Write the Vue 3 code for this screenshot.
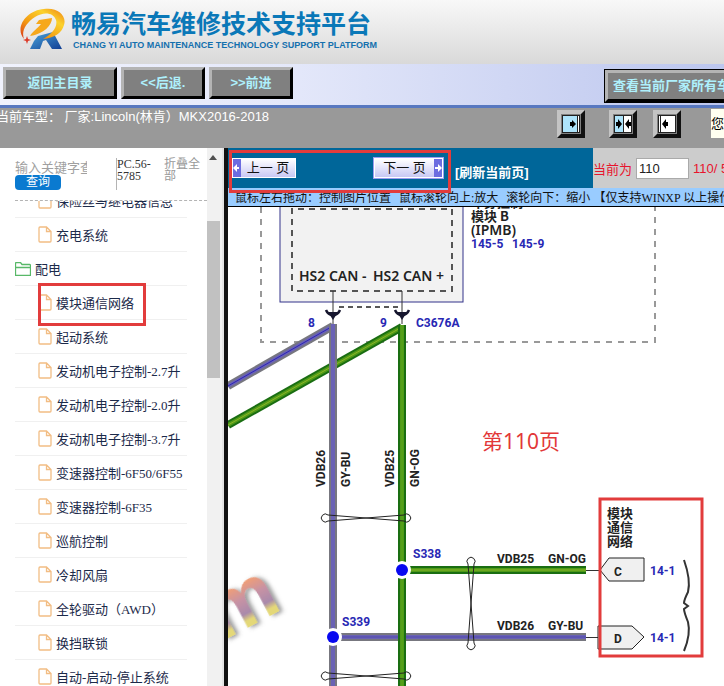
<template>
  <div class="page">
    <header class="banner">
      <svg class="logo" viewBox="20 8 46 42" aria-hidden="true">
        <defs>
          <linearGradient id="swoosh" x1="0" y1="1" x2="1" y2="0">
            <stop offset="0" stop-color="#d8341c" />
            <stop offset="0.35" stop-color="#f39a12" />
            <stop offset="0.7" stop-color="#fbd22c" />
            <stop offset="1" stop-color="#ee7d14" />
          </linearGradient>
          <linearGradient id="leg" x1="0" y1="0" x2="1" y2="1">
            <stop offset="0" stop-color="#4aa6dc" />
            <stop offset="1" stop-color="#123f94" />
          </linearGradient>
        </defs>
        <path d="M38 36 L53 32 L62 49 H52 L46 40 L43 41 L40 49 H30 L34 41 Z" fill="url(#leg)" />
        <path d="M24 39 C14 27 27 10 44 9 C58 7 67 16 64 25 C62 33 54 38 43 39 C52 34 58 27 56 20 C53 12 43 12 35 17 C26 23 21 31 24 39 Z" fill="url(#swoosh)" />
        <path d="M30 36 C32 32 38 28 41 24 L36 24 L39 20 L52 18 C52 25 44 34 30 36 Z" fill="#f6a81c" />
        <path d="M27 36 L28 39 L31 40 L28 41 L27 44 L26 41 L23 40 L26 39 Z" fill="#dc3a28" />
      </svg>
      <div class="brand">
        <h1>畅易汽车维修技术支持平台</h1>
        <p>CHANG YI AUTO MAINTENANCE TECHNOLOGY SUPPORT PLATFORM</p>
      </div>
    </header>

    <nav class="toolbar">
      <button class="bevel wide">返回主目录</button>
      <button class="bevel">&lt;&lt;后退.</button>
      <button class="bevel">&gt;&gt;前进</button>
      <button class="bevel all-models">查看当前厂家所有车型</button>
    </nav>

    <div class="status">
      <span class="model">当前车型： 厂家:Lincoln(林肯）MKX2016-2018</span>
      <div class="layout-btns">
        <button class="square" aria-label="展开左栏">
          <svg viewBox="0 0 18 18">
            <rect x="0.5" y="0.5" width="17" height="17" fill="#fff" stroke="#222" />
            <rect x="1" y="1" width="14" height="16" fill="#aee4fb" />
            <path d="M15.5 1 V17" stroke="#222" />
            <path d="M8 7 H10 V5 L14 9 L10 13 V11 H8 Z" />
          </svg>
        </button>
        <button class="square" aria-label="左右均分">
          <svg viewBox="0 0 18 18">
            <rect x="0.5" y="0.5" width="17" height="17" fill="#fff" stroke="#222" />
            <rect x="1" y="1" width="8" height="16" fill="#aee4fb" />
            <path d="M9.5 1 V17" stroke="#222" />
            <path d="M2 7 H4 V4 L8 9 L4 14 V11 H2 Z M17 7 H15 V4 L11 9 L15 14 V11 H17 Z" />
          </svg>
        </button>
        <button class="square" aria-label="收起左栏">
          <svg viewBox="0 0 18 18">
            <rect x="0.5" y="0.5" width="17" height="17" fill="#fff" stroke="#222" />
            <path d="M2.5 1 V17" stroke="#222" />
            <path d="M10 7 H8 V4 L4 9 L8 14 V11 H10 Z" />
          </svg>
        </button>
      </div>
      <span class="greeting">您好</span>
    </div>

    <main class="body">
      <aside class="sidebar">
        <div class="tree-panel">
          <div class="search">
            <div class="search-form">
              <input v-model="keyword" type="text" aria-label="关键字" placeholder="输入关键字查询" />
              <button class="query">查询</button>
            </div>
            <span class="code">PC.56-5785</span>
            <a href="#" class="fold">折叠全部</a>
          </div>
          <div class="tree">
            <ul>
              <li v-for="item in items" :key="item.name" :class="{ folder: item.folder }">
                <svg v-if="item.folder" class="folder-icon" viewBox="0 0 16 14">
                  <path d="M0.5 13.5 V1.5 Q0.5 0.5 1.5 0.5 H5.5 L7 2.5 H14.5 Q15.5 2.5 15.5 3.5 V13.5 Z M0.5 5.5 H15.5" />
                </svg>
                <svg v-else class="file-icon" viewBox="0 0 14 17">
                  <path d="M2 1 H8.5 L13 5.5 V15 Q13 16 12 16 H2 Q1 16 1 15 V2 Q1 1 2 1 Z M8.5 1 V5.5 H13" />
                </svg>
                <a href="#">{{ item.name }}</a>
                <span v-if="item.marked" class="mark mark-item"></span>
              </li>
            </ul>
          </div>
        </div>
        <div class="scrollbar">
          <svg viewBox="0 0 8 5"><path d="M0 5 L4 0 L8 5 Z" fill="#505050" /></svg>
          <div class="thumb"></div>
        </div>
      </aside>

      <section class="viewer">
        <div class="pager">
          <div class="pager-left">
            <button class="page-btn">
              <svg viewBox="0 0 8 18"><path d="M0 9 L4 5 V8 H6 V10 H4 V13 Z" /></svg>
              <span>上一 页</span>
            </button>
            <button class="page-btn next">
              <span>下一 页</span>
              <svg viewBox="0 0 8 18"><path d="M8 9 L4 5 V8 H1 V10 H4 V13 Z" /></svg>
            </button>
            <a href="#" class="refresh">[刷新当前页]</a>
            <span class="mark mark-pager"></span>
          </div>
          <div class="pager-right">
            <label for="page">当前为</label>
            <input id="page" v-model="page" type="text" />
            <span>110/ 594</span>
          </div>
        </div>
        <div class="hint">
          <span>鼠标左右拖动：控制图片位置</span>
          <span class="sep"></span>
          <span>鼠标滚轮向上:放大</span>
          <span class="down">滚轮向下：缩小</span>
          <span>【仅支持WINXP 以上操作系统】</span>
        </div>

        <div class="canvas">
          <svg class="diagram" viewBox="228 207 496 479" preserveAspectRatio="xMinYMin slice">
            <defs>
              <linearGradient id="mark" x1="0" y1="0" x2="0" y2="1">
                <stop offset="0.3" stop-color="#f6a070" />
                <stop offset="0.5" stop-color="#c792a4" />
                <stop offset="0.66" stop-color="#a98aab" />
                <stop offset="0.74" stop-color="#e4d878" />
              </linearGradient>
              <filter id="soft" x="-20%" y="-20%" width="140%" height="140%">
                <feDropShadow dx="3" dy="2" stdDeviation="2" flood-color="#555" flood-opacity="0.6" />
              </filter>
            </defs>

            <text class="watermark" transform="translate(221 642) rotate(-28)" filter="url(#soft)">m</text>

            <!-- module outline -->
            <path class="outer" d="M261 207 V342 H655 V207" />
            <rect x="280" y="190" width="183" height="112" fill="#f2f2f2" stroke="#33338a" />
            <path class="inner" d="M292 291 V209 H452 V291 Z" />
            <g class="pin-name">
              <text x="299" y="281">HS2 CAN -</text>
              <text x="373" y="281">HS2 CAN +</text>
            </g>
            <g class="cn">
              <text x="471" y="207">车身控制</text>
              <text x="471" y="221">模块 B</text>
            </g>
            <text class="pin-name" x="471" y="235">(IPMB)</text>
            <g class="ref">
              <text x="471" y="248">145-5</text>
              <text x="512" y="248">145-9</text>
            </g>

            <!-- wires -->
            <g v-for="wire in wires" :key="wire.d" fill="none">
              <path :d="wire.d" :stroke="wire.edge" stroke-width="8" />
              <path :d="wire.d" :stroke="wire.core" stroke-width="4" />
              <path :d="wire.d" :stroke="wire.line" stroke-width="1" />
            </g>

            <!-- connector C3676A -->
            <path d="M339 307 H398" stroke="#222" stroke-width="1.5" stroke-dasharray="5 4" />
            <g v-for="x in [333, 402]" :key="x">
              <path :d="`M${x} 291 V324`" stroke="#333" />
              <path :d="`M${x - 7} 310 Q${x - 5} 315 ${x} 315 Q${x + 5} 315 ${x + 7} 310`" fill="none" stroke="#16162e" stroke-width="2.5" />
              <path :d="`M${x - 5} 312 H${x + 5} L${x} 320 Z`" fill="#16162e" />
            </g>
            <g class="ref">
              <text x="308" y="327">8</text>
              <text x="380" y="327">9</text>
              <text x="416" y="327">C3676A</text>
              <text x="413" y="558">S338</text>
              <text x="342" y="626">S339</text>
              <text x="650" y="575">14-1</text>
              <text x="650" y="642">14-1</text>
            </g>

            <!-- twisted pair loops -->
            <g v-for="y in [518, 676]" :key="y" class="loop">
              <path :d="`M328 ${y - 3} A4 4 0 1 0 328 ${y + 3} L404 ${y - 3} A4 4 0 1 1 404 ${y + 3} Z`" />
            </g>
            <path class="loop" d="M468 564 A4 4 0 1 1 474 564 L468 643 A4 4 0 1 0 474 643 Z" />

            <!-- splices -->
            <g v-for="s in splices" :key="s.y">
              <circle :cx="s.x" :cy="s.y" r="9" fill="#fff" />
              <circle :cx="s.x" :cy="s.y" r="6" fill="#0808f0" />
            </g>

            <g class="wire-name">
              <text v-for="t in vertical" :key="t.name" :transform="`translate(${t.x} 487) rotate(-90)`">{{ t.name }}</text>
              <text x="497" y="563">VDB25</text>
              <text x="548" y="563">GN-OG</text>
              <text x="497" y="630">VDB26</text>
              <text x="548" y="630">GY-BU</text>
            </g>

            <!-- page references -->
            <path d="M586 570.5 H600 M586 637.5 H598" stroke="#333" />
            <path class="tag" d="M644 558 V581 H609 L600 570 L609 558 Z" />
            <path class="tag" d="M598 626 H632 L644 637 L632 649 H598 Z" />
            <g class="wire-name">
              <text x="614" y="576">C</text>
              <text x="614" y="643">D</text>
            </g>
            <g class="cn">
              <text x="607" y="518">模块</text>
              <text x="607" y="532">通信</text>
              <text x="607" y="546">网络</text>
            </g>
            <path class="brace" d="M684 560 Q691 580 688 592 Q684 600 684 603 L688 606 L684 609 Q684 612 688 622 Q691 634 684 651" />

            <rect class="frame" x="600" y="499" width="102" height="157" />
            <text class="page-note" x="482" y="449">第110页</text>
          </svg>
        </div>
      </section>
    </main>
  </div>
</template>

<script setup>
import { ref } from 'vue'

const keyword = ref('')
const page = ref('110')

const items = [
  { name: '保险丝与继电器信息' },
  { name: '充电系统' },
  { name: '配电', folder: true },
  { name: '模块通信网络', marked: true },
  { name: '起动系统' },
  { name: '发动机电子控制-2.7升' },
  { name: '发动机电子控制-2.0升' },
  { name: '发动机电子控制-3.7升' },
  { name: '变速器控制-6F50/6F55' },
  { name: '变速器控制-6F35' },
  { name: '巡航控制' },
  { name: '冷却风扇' },
  { name: '全轮驱动（AWD）' },
  { name: '换挡联锁' },
  { name: '自动-启动-停止系统' },
]

const violet = { edge: '#77777f', core: '#6a62b4', line: '#5048b0' }
const green = { edge: '#1a6e12', core: '#4f9a18', line: '#8cb428' }

// Later wires are drawn over earlier ones
const wires = [
  { d: 'M402 327 L228 425', ...green },
  { d: 'M333 326 L228 386', ...violet, line: '#2a22b8' },
  { d: 'M333 637 H586', ...violet },
  { d: 'M333 324 V686', ...violet, line: '#6a62b4' },
  { d: 'M402 570 H586', ...green },
  { d: 'M402 325 V686', ...green, line: '#5ca41c' },
]

const splices = [
  { x: 402, y: 570 },
  { x: 333, y: 637 },
]

const vertical = [
  { name: 'VDB26', x: 325 },
  { name: 'GY-BU', x: 350 },
  { name: 'VDB25', x: 394 },
  { name: 'GN-OG', x: 419 },
]
</script>

<style>
body {
  overflow: hidden;
}
</style>

<style scoped>
.page {
  display: flex;
  flex-direction: column;
  height: 100vh;
  overflow: hidden;
  background: #fff;
  font-family: "Liberation Sans", "Noto Sans CJK SC", sans-serif;
  font-size: 13px;
}

.page * {
  box-sizing: border-box;
}

button {
  padding: 0;
  font-family: inherit;
  cursor: pointer;
}

a {
  color: inherit;
  text-decoration: none;
}

.banner {
  display: flex;
  flex: none;
  gap: 5px;
  height: 64px;
  padding: 8px 20px;
  background: linear-gradient(#f8f8f8, #d9d9d9);
}

.logo {
  width: 46px;
  height: 42px;
}

.brand h1 {
  margin: 0;
  color: #0a78b8;
  font-size: 25px;
  line-height: 32px;
  white-space: nowrap;
}

.brand p {
  margin: 0 2px;
  color: #1470ae;
  font-size: 9px;
  font-weight: bold;
  line-height: 11px;
  white-space: nowrap;
}

.toolbar {
  display: flex;
  flex: none;
  gap: 4px;
  height: 44px;
  padding: 3px;
  overflow: hidden;
  border-bottom: 3px solid #5878c0;
  background: linear-gradient(to right, #f0f2fd, #e4e8fa 40%, #bcc6ee);
}

.bevel {
  flex: none;
  width: 84px;
  height: 32px;
  padding-bottom: 3px;
  border: 3px solid;
  border-color: #b4b4b4 #000 #000 #b4b4b4;
  background: #808080;
  color: #aef0fc;
  font-size: 13px;
  font-weight: bold;
  white-space: nowrap;
}

.wide {
  width: 114px;
}

.all-models {
  width: 150px;
  margin: 3px -34px 0 auto;
  padding-right: 4px;
  outline: 1px solid #000;
}

.status {
  display: flex;
  flex: none;
  height: 40px;
  overflow: hidden;
  background: #999;
}

.model {
  margin-left: -4px;
  color: #fff;
  line-height: 17px;
  white-space: nowrap;
}

.layout-btns {
  display: flex;
  gap: 16px;
  margin: 2px 0 0 auto;
}

.square {
  width: 28px;
  height: 28px;
  border: 4px solid;
  border-color: #c4c4c4 #111 #111 #c4c4c4;
  background: #808080;
}

.square:first-child {
  margin-right: 8px;
}

.square svg {
  display: block;
  width: 18px;
  height: 18px;
  margin: 1px;
}

.greeting {
  width: 13px;
  height: 29px;
  margin: 1px 0 0 30px;
  overflow: hidden;
  background: #fffff0;
  line-height: 30px;
  white-space: nowrap;
}

.body {
  display: flex;
  flex: 1;
  min-height: 0;
}

.sidebar {
  display: flex;
  flex: none;
  width: 228px;
  border-right: 4px solid #111;
}

.tree-panel {
  display: flex;
  flex: 1;
  flex-direction: column;
  min-width: 0;
}

.search {
  display: flex;
  flex: none;
  height: 53px;
  margin-left: 15px;
  padding-top: 10px;
  border-bottom: 1px dashed #b4b4b4;
}

.search-form {
  width: 101px;
}

.search-form input {
  display: block;
  width: 72px;
  height: 17px;
  padding: 0;
  border: 0;
  background: none;
  font-family: "Noto Sans CJK SC", sans-serif;
  font-size: 13px;
}

.search-form input::placeholder {
  color: #a0a0a0;
}

.query {
  display: block;
  width: 46px;
  height: 15px;
  border: 0;
  border-radius: 4px;
  background: #0a7ad0;
  color: #fff;
  font-size: 12px;
  line-height: 15px;
}

.code {
  width: 48px;
  height: 32px;
  border-left: 1px solid #b4b4b4;
  color: #333;
  font-family: "Liberation Serif", serif;
  font-size: 12px;
  line-height: 12px;
}

.fold {
  width: 38px;
  color: #999;
  font-family: "Liberation Serif", "Noto Sans CJK SC", serif;
  font-size: 12px;
  line-height: 12px;
}

.tree {
  flex: 1;
  overflow: hidden;
}

/* scrolled half a row down */
.tree ul {
  margin: -17px 20px 0 15px;
  padding: 0;
  list-style: none;
}

.tree li {
  position: relative;
  display: flex;
  align-items: center;
  gap: 4px;
  height: 34px;
  padding-left: 23px;
  border-bottom: 1px solid #f0f0f0;
  color: #1c2a4a;
  font-family: "Liberation Serif", "Noto Sans CJK SC", serif;
  white-space: nowrap;
}

.tree li.folder {
  padding-left: 0;
}

.file-icon,
.folder-icon {
  flex: none;
  width: 14px;
  fill: none;
  stroke: #f2bd84;
  stroke-width: 1.3;
}

.folder-icon {
  width: 16px;
  stroke: #58b868;
}

.scrollbar {
  display: flex;
  flex: none;
  flex-direction: column;
  align-items: center;
  gap: 61px;
  width: 17px;
  padding: 7px 3px 0 0;
  border-right: 2px solid #e4e4e4;
  background: #f1f1f1;
}

.scrollbar svg {
  width: 8px;
  height: 5px;
}

.thumb {
  width: 13px;
  height: 157px;
  background: #c1c1c1;
}

.mark {
  position: absolute;
  border: 3px solid #e23c3c;
  pointer-events: none;
}

.mark-item {
  top: -3px;
  left: 23px;
  width: 108px;
  height: 43px;
}

.viewer {
  display: flex;
  flex: 1;
  flex-direction: column;
  min-width: 0;
}

.pager {
  display: flex;
  flex: none;
  height: 40px;
}

.pager-left {
  position: relative;
  display: flex;
  flex: none;
  align-items: center;
  width: 365px;
  padding-left: 4px;
  background: #069;
}

.mark-pager {
  top: 2px;
  left: 1px;
  width: 222px;
  height: 43px;
}

.page-btn {
  display: flex;
  align-items: center;
  width: 64px;
  height: 20px;
  border: 1px solid #fff;
  background: linear-gradient(#fff, #c8c8f4);
  color: #111;
  font-size: 13px;
  line-height: 18px;
}

.page-btn span {
  flex: 1;
}

.page-btn svg {
  width: 8px;
  height: 18px;
  background: #6c6ce0;
  fill: #fff;
}

.next {
  width: 69px;
  margin-left: 78px;
  outline: 1px solid #9c9cf0;
}

.refresh {
  align-self: flex-end;
  margin-left: 12px;
  color: #fff;
  font-weight: bold;
  line-height: 30px;
}

.pager-right {
  display: flex;
  flex: 1;
  align-items: center;
  gap: 4px;
  overflow: hidden;
  background: #ccc;
  color: #e8142c;
  white-space: nowrap;
}

.pager-right input {
  flex: none;
  width: 53px;
  height: 21px;
  padding: 0 2px;
  border: 1px solid #aaa;
  background: #fff;
  color: #222;
  font-family: inherit;
  font-size: 13px;
}

.hint {
  display: flex;
  flex: none;
  height: 19px;
  padding-left: 7px;
  overflow: hidden;
  border-bottom: 1px solid #000;
  background: #9cf;
  color: #111;
  font-family: "Liberation Serif", "Noto Sans CJK SC", serif;
  font-size: 12px;
  line-height: 20px;
  white-space: nowrap;
}

.sep {
  width: 1px;
  height: 12px;
  margin: 4px 4px;
  background: #7aa8dc;
}

.down {
  margin: 0 3px 0 8px;
}

.canvas {
  flex: 1;
  min-height: 0;
  overflow: hidden;
}

.diagram {
  display: block;
  width: 100%;
  height: 100%;
}

.outer,
.inner,
.loop,
.brace,
.frame {
  fill: none;
}

.outer {
  stroke: #999;
  stroke-width: 2;
  stroke-dasharray: 6 6;
}

.inner {
  stroke: #555;
  stroke-width: 2;
  stroke-dasharray: 6 5;
}

.loop {
  stroke: #222;
}

.brace {
  stroke: #333;
  stroke-width: 2;
}

.tag {
  fill: #f0f0f0;
  stroke: #222;
}

.frame {
  stroke: #e23c3c;
  stroke-width: 3;
}

.pin-name {
  fill: #222;
  font-family: "Noto Sans", sans-serif;
  font-size: 14px;
  font-weight: 600;
}

.cn {
  fill: #222;
  font-family: "Noto Sans CJK SC", sans-serif;
  font-size: 13px;
  font-weight: bold;
}

.ref,
.wire-name {
  fill: #2828b4;
  font-family: Roboto, sans-serif;
  font-size: 12px;
  font-weight: bold;
}

.wire-name {
  fill: #222;
}

.page-note {
  fill: #e23838;
  font-family: "Noto Sans", "Noto Sans CJK SC", sans-serif;
  font-size: 21px;
}

.watermark {
  fill: url(#mark);
  font-family: "Liberation Sans", sans-serif;
  font-size: 80px;
  font-weight: bold;
}
</style>
